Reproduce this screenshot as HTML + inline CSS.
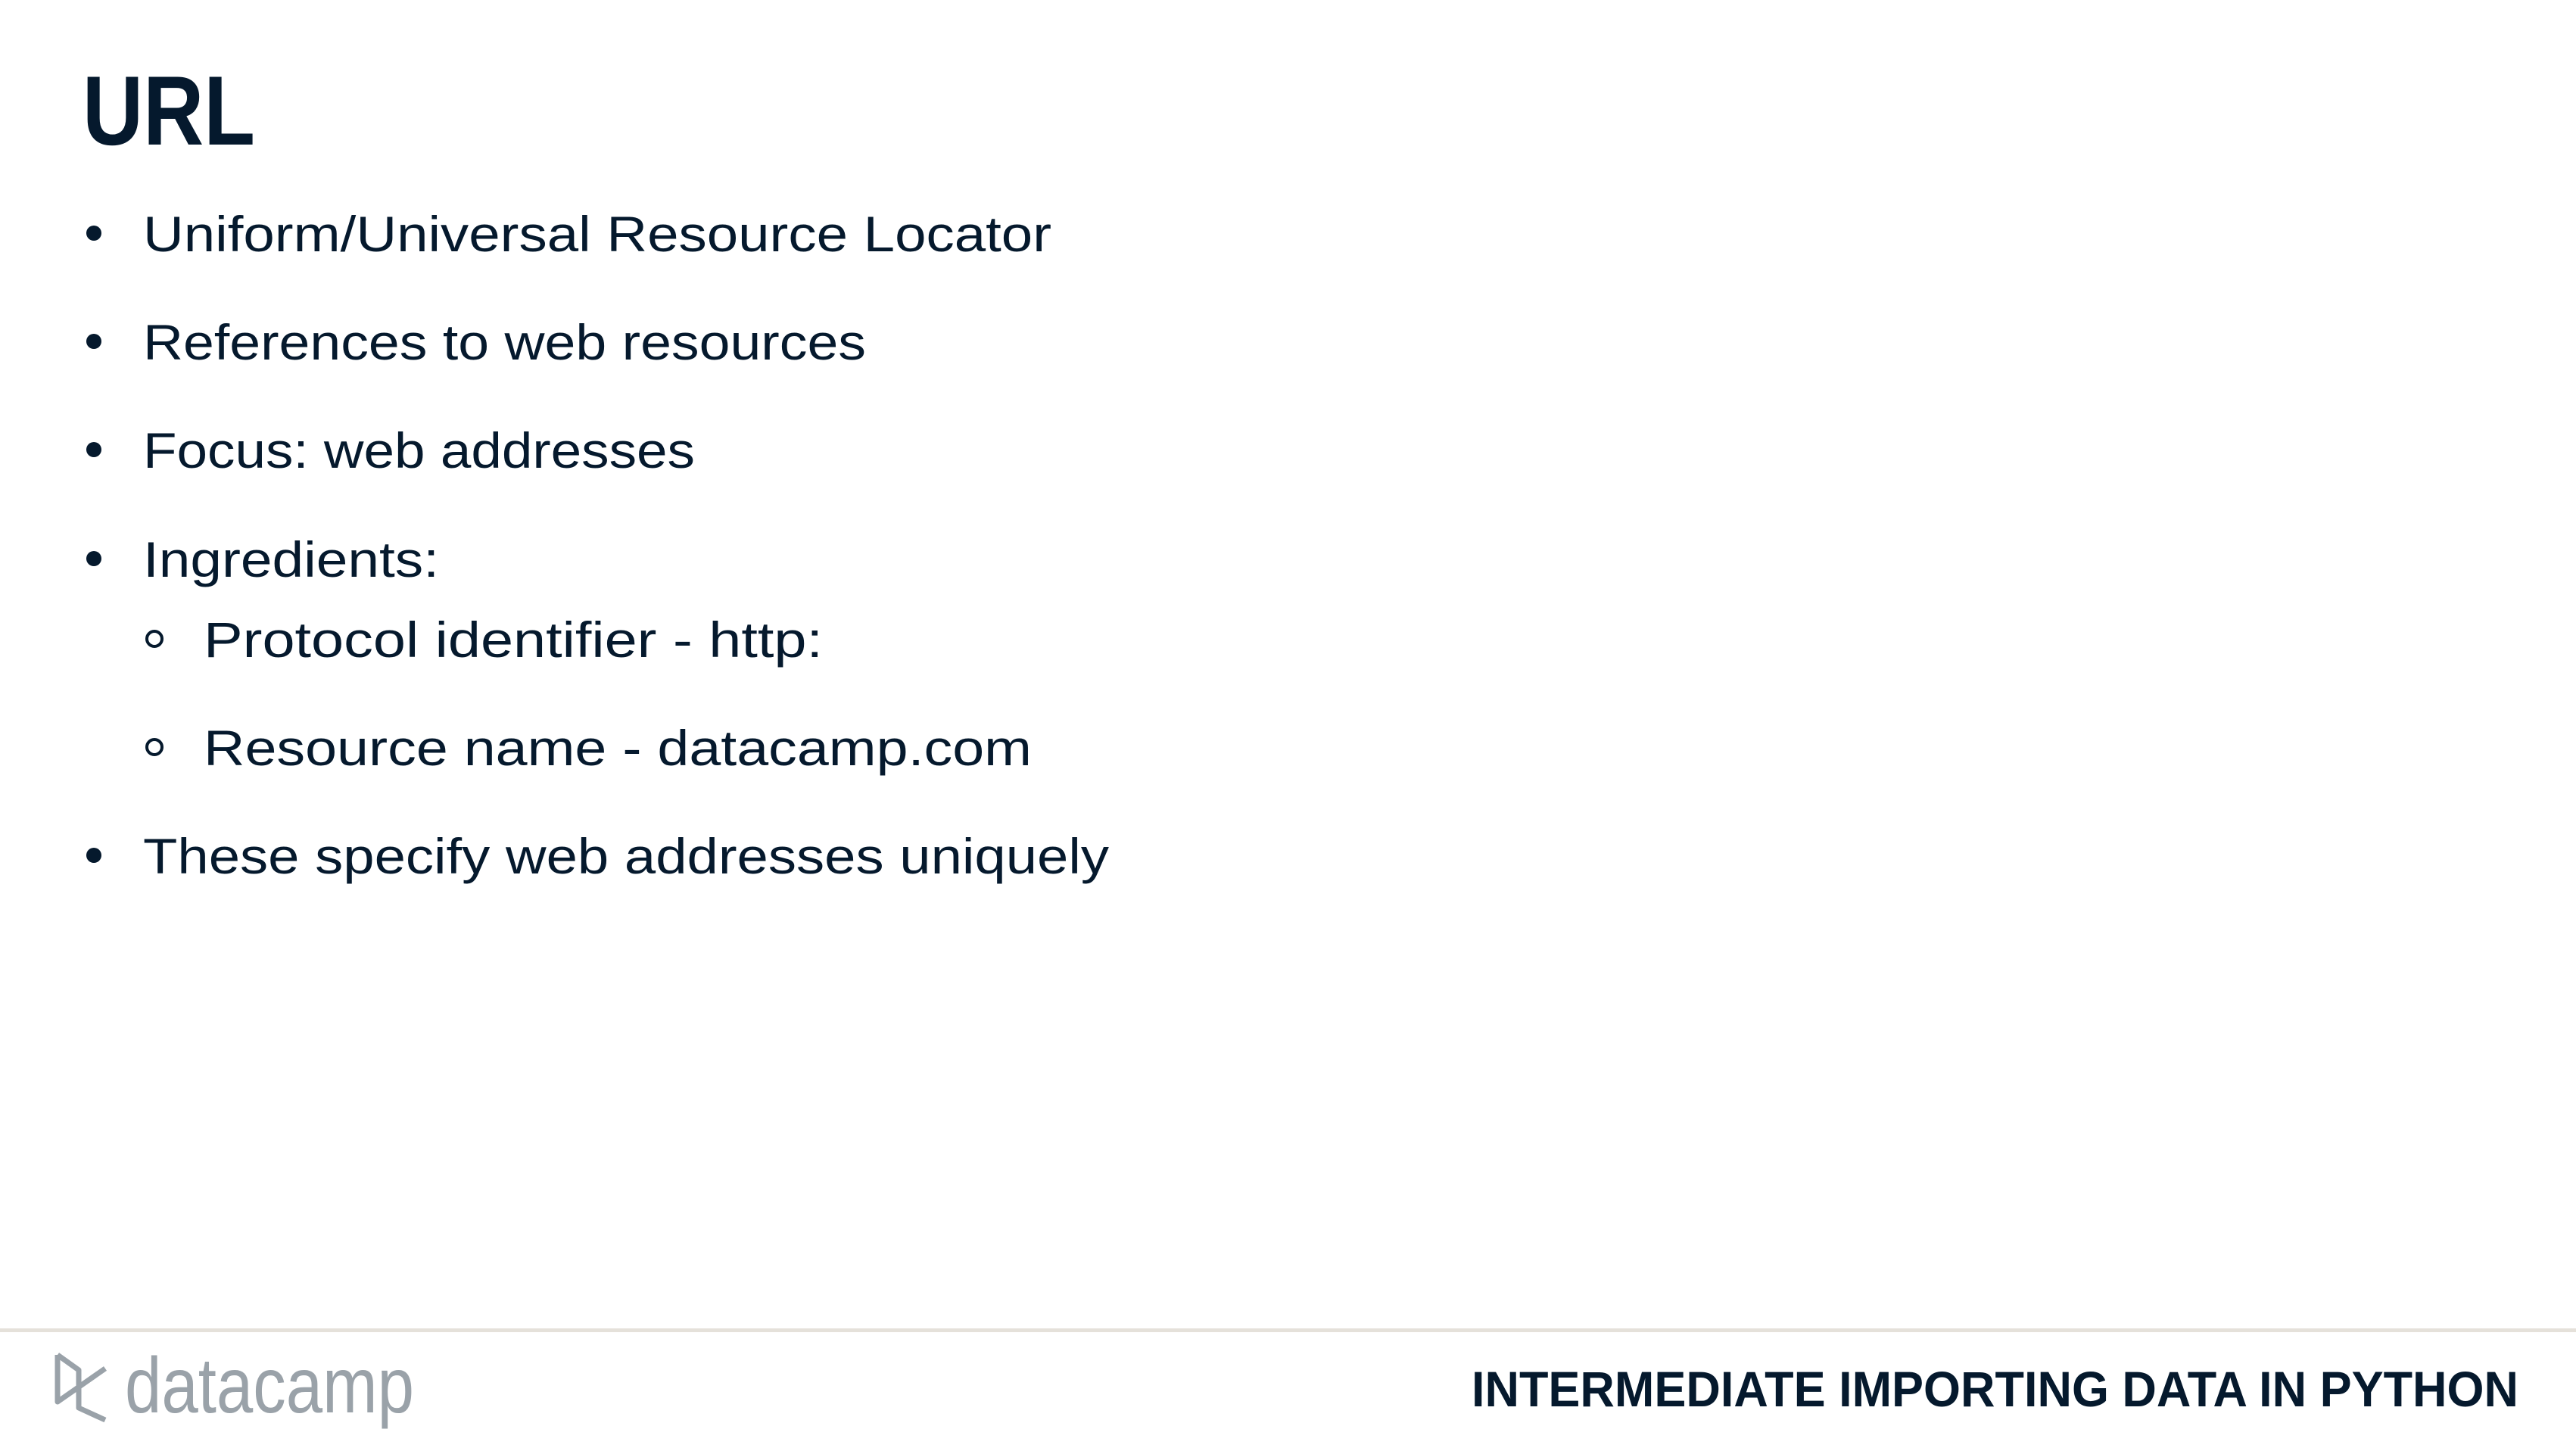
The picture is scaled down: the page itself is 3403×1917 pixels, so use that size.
<!DOCTYPE html>
<html><head><meta charset="utf-8"><style>
html,body{margin:0;padding:0;background:#fff;width:3403px;height:1917px;overflow:hidden}
svg{display:block}
text{font-family:"Liberation Sans",sans-serif;fill:#05192d}
</style></head><body>
<svg width="3403" height="1917" viewBox="0 0 3403 1917" xmlns="http://www.w3.org/2000/svg">
<text x="109" y="191" font-size="130" font-weight="bold" textLength="228" lengthAdjust="spacingAndGlyphs">URL</text>
<g font-size="66">
<circle cx="124" cy="308" r="10" fill="#05192d"/>
<text x="189" y="332" textLength="1200" lengthAdjust="spacingAndGlyphs">Uniform/Universal Resource Locator</text>
<circle cx="124" cy="451" r="10" fill="#05192d"/>
<text x="189" y="475" textLength="955" lengthAdjust="spacingAndGlyphs">References to web resources</text>
<circle cx="124" cy="594" r="10" fill="#05192d"/>
<text x="189" y="618" textLength="729" lengthAdjust="spacingAndGlyphs">Focus: web addresses</text>
<circle cx="124" cy="738" r="10" fill="#05192d"/>
<text x="189" y="762" textLength="391" lengthAdjust="spacingAndGlyphs">Ingredients:</text>
<circle cx="204" cy="844" r="10" fill="none" stroke="#05192d" stroke-width="4"/>
<text x="269" y="868" textLength="818" lengthAdjust="spacingAndGlyphs">Protocol identifier - http:</text>
<circle cx="204" cy="987" r="10" fill="none" stroke="#05192d" stroke-width="4"/>
<text x="269" y="1011" textLength="1094" lengthAdjust="spacingAndGlyphs">Resource name - datacamp.com</text>
<circle cx="124" cy="1130" r="10" fill="#05192d"/>
<text x="189" y="1154" textLength="1276" lengthAdjust="spacingAndGlyphs">These specify web addresses uniquely</text>
</g>
<rect x="0" y="1755" width="3403" height="5" fill="#e5e1da"/>
<g stroke="#9aa2a9" stroke-width="7" fill="none" stroke-linejoin="round">
<path d="M76 1790 L76 1852 L139 1808"/>
<path d="M76 1790 L104 1810 L104 1860 L139 1876"/>
</g>
<text x="165" y="1866" font-size="104" style="fill:#9aa2a9" textLength="382" lengthAdjust="spacingAndGlyphs">datacamp</text>
<text x="3327" y="1858" font-size="66" font-weight="bold" text-anchor="end" textLength="1383" lengthAdjust="spacingAndGlyphs">INTERMEDIATE IMPORTING DATA IN PYTHON</text>
</svg>
</body></html>
